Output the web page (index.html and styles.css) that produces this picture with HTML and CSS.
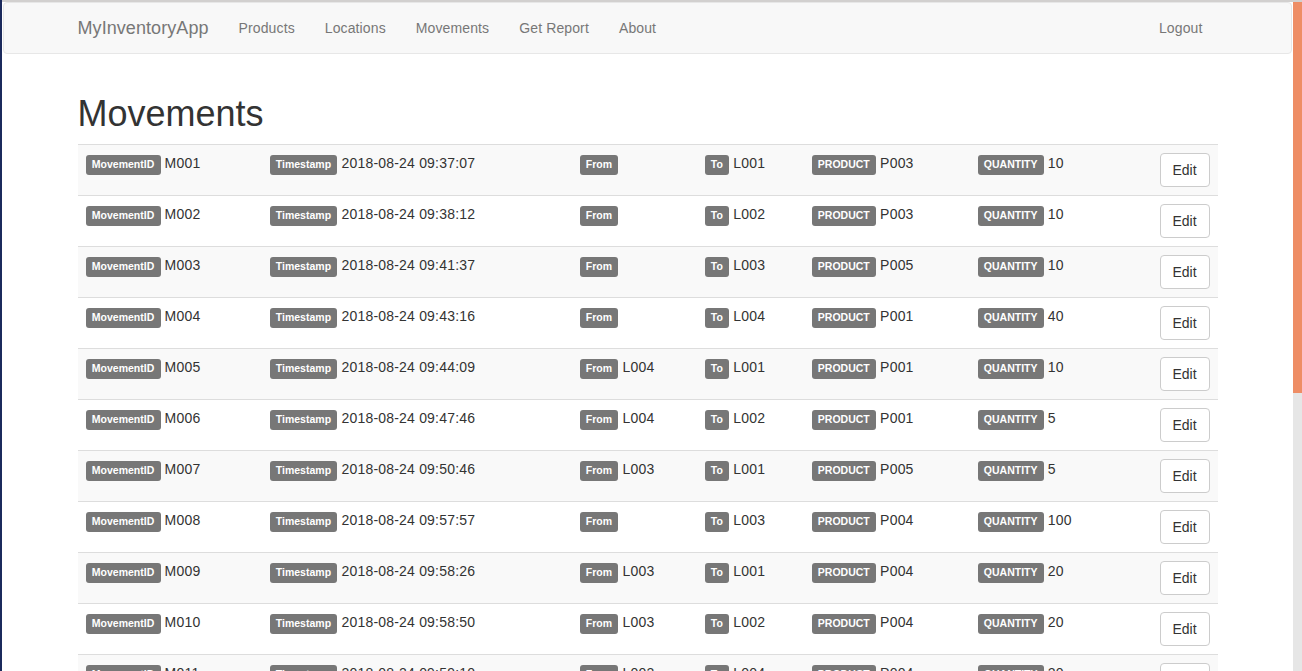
FILE: index.html
```html
<!DOCTYPE html>
<html lang="en">
<head>
<meta charset="utf-8">
<title>Movements - MyInventoryApp</title>
<link rel="stylesheet" href="styles.css">
</head>
<body>
<div class="window">
  <div class="viewport">
    <nav class="navbar">
      <div class="nav-container">
        <a class="brand" href="#">MyInventoryApp</a>
        <ul class="nav">
          <li><a href="#">Products</a></li>
          <li><a href="#">Locations</a></li>
          <li><a href="#">Movements</a></li>
          <li><a href="#">Get Report</a></li>
          <li><a href="#">About</a></li>
        </ul>
        <ul class="nav nav-right">
          <li><a href="#">Logout</a></li>
        </ul>
      </div>
    </nav>
    <main class="container">
      <h1 class="title">Movements</h1>
      <table class="table">
        <colgroup>
          <col class="c-id"><col class="c-ts"><col class="c-from"><col class="c-to"><col class="c-prod"><col class="c-qty"><col class="c-act">
        </colgroup>
        <tbody>
          <tr><td><span class="label">MovementID</span> M001</td><td><span class="label">Timestamp</span> 2018-08-24 09:37:07</td><td><span class="label">From</span> </td><td><span class="label">To</span> L001</td><td><span class="label">PRODUCT</span> P003</td><td><span class="label">QUANTITY</span> 10</td><td><a class="btn" href="#">Edit</a></td></tr>
          <tr><td><span class="label">MovementID</span> M002</td><td><span class="label">Timestamp</span> 2018-08-24 09:38:12</td><td><span class="label">From</span> </td><td><span class="label">To</span> L002</td><td><span class="label">PRODUCT</span> P003</td><td><span class="label">QUANTITY</span> 10</td><td><a class="btn" href="#">Edit</a></td></tr>
          <tr><td><span class="label">MovementID</span> M003</td><td><span class="label">Timestamp</span> 2018-08-24 09:41:37</td><td><span class="label">From</span> </td><td><span class="label">To</span> L003</td><td><span class="label">PRODUCT</span> P005</td><td><span class="label">QUANTITY</span> 10</td><td><a class="btn" href="#">Edit</a></td></tr>
          <tr><td><span class="label">MovementID</span> M004</td><td><span class="label">Timestamp</span> 2018-08-24 09:43:16</td><td><span class="label">From</span> </td><td><span class="label">To</span> L004</td><td><span class="label">PRODUCT</span> P001</td><td><span class="label">QUANTITY</span> 40</td><td><a class="btn" href="#">Edit</a></td></tr>
          <tr><td><span class="label">MovementID</span> M005</td><td><span class="label">Timestamp</span> 2018-08-24 09:44:09</td><td><span class="label">From</span> L004</td><td><span class="label">To</span> L001</td><td><span class="label">PRODUCT</span> P001</td><td><span class="label">QUANTITY</span> 10</td><td><a class="btn" href="#">Edit</a></td></tr>
          <tr><td><span class="label">MovementID</span> M006</td><td><span class="label">Timestamp</span> 2018-08-24 09:47:46</td><td><span class="label">From</span> L004</td><td><span class="label">To</span> L002</td><td><span class="label">PRODUCT</span> P001</td><td><span class="label">QUANTITY</span> 5</td><td><a class="btn" href="#">Edit</a></td></tr>
          <tr><td><span class="label">MovementID</span> M007</td><td><span class="label">Timestamp</span> 2018-08-24 09:50:46</td><td><span class="label">From</span> L003</td><td><span class="label">To</span> L001</td><td><span class="label">PRODUCT</span> P005</td><td><span class="label">QUANTITY</span> 5</td><td><a class="btn" href="#">Edit</a></td></tr>
          <tr><td><span class="label">MovementID</span> M008</td><td><span class="label">Timestamp</span> 2018-08-24 09:57:57</td><td><span class="label">From</span> </td><td><span class="label">To</span> L003</td><td><span class="label">PRODUCT</span> P004</td><td><span class="label">QUANTITY</span> 100</td><td><a class="btn" href="#">Edit</a></td></tr>
          <tr><td><span class="label">MovementID</span> M009</td><td><span class="label">Timestamp</span> 2018-08-24 09:58:26</td><td><span class="label">From</span> L003</td><td><span class="label">To</span> L001</td><td><span class="label">PRODUCT</span> P004</td><td><span class="label">QUANTITY</span> 20</td><td><a class="btn" href="#">Edit</a></td></tr>
          <tr><td><span class="label">MovementID</span> M010</td><td><span class="label">Timestamp</span> 2018-08-24 09:58:50</td><td><span class="label">From</span> L003</td><td><span class="label">To</span> L002</td><td><span class="label">PRODUCT</span> P004</td><td><span class="label">QUANTITY</span> 20</td><td><a class="btn" href="#">Edit</a></td></tr>
          <tr><td><span class="label">MovementID</span> M011</td><td><span class="label">Timestamp</span> 2018-08-24 09:59:10</td><td><span class="label">From</span> L002</td><td><span class="label">To</span> L004</td><td><span class="label">PRODUCT</span> P004</td><td><span class="label">QUANTITY</span> 20</td><td><a class="btn" href="#">Edit</a></td></tr>
        </tbody>
      </table>
    </main>
  </div>
  <div class="scrollbar" aria-hidden="true">
    <div class="scroll-thumb"></div>
  </div>
</div>
</body>
</html>
```
FILE: styles.css
```css
* { box-sizing: border-box; }

html, body {
  margin: 0;
  height: 100%;
  overflow: hidden;
}

body {
  background: #1b2a5c;
  padding-left: 2px;
  font-family: "Liberation Sans", Arial, sans-serif;
  font-size: 14px;
  line-height: 1.42857;
  color: #333;
}

.window {
  height: 671px;
  background: #fff;
  border-top: 2px solid #d2d0cf;
  display: flex;
}

.viewport {
  flex: 1;
  min-width: 0;
  height: 669px;
  overflow: hidden;
}

.scrollbar {
  flex: 0 0 9px;
  height: 669px;
  background: #e6e6e6;
}

.scroll-thumb {
  height: 391px;
  background: #ee8d65;
}

a { text-decoration: none; }

/* navbar */
.navbar {
  margin: 0 1px 20px 1px;
  min-height: 52px;
  background: #f8f8f8;
  border: 1px solid #e7e7e7;
  border-radius: 4px;
}

.nav-container {
  width: 1170px;
  margin: 0 auto;
  padding: 0 15px;
  display: flex;
  align-items: flex-start;
}

.brand {
  margin-left: -15px;
  padding: 15px;
  height: 50px;
  font-size: 18px;
  line-height: 20px;
  letter-spacing: 0.07px;
  color: #777;
}

.nav {
  list-style: none;
  margin: 0;
  padding: 0;
  display: flex;
}

.nav a {
  display: block;
  padding: 15px;
  line-height: 20px;
  letter-spacing: 0.12px;
  color: #777;
}

.nav-right {
  margin-left: auto;
}

/* content */
.container {
  display: flow-root;
  width: 1170px;
  margin: 0 auto;
  padding: 0 15px;
}

.title {
  margin: 20px 0 10px;
  font-size: 36px;
  font-weight: 500;
  line-height: 1.1;
  color: #333;
}

.table {
  width: 100%;
  table-layout: fixed;
  border-collapse: collapse;
  border-spacing: 0;
  margin-bottom: 20px;
}

.c-id { width: 184px; }
.c-ts { width: 310px; }
.c-from { width: 125px; }
.c-to { width: 107px; }
.c-prod { width: 166px; }
.c-qty { width: 182px; }
.c-act { width: 66px; }

.table td {
  padding: 8px;
  vertical-align: top;
  border-top: 1px solid #ddd;
  line-height: 20px;
  letter-spacing: 0.2px;
  white-space: nowrap;
}

.table tr:nth-child(odd) td {
  background: #f9f9f9;
}

.label {
  display: inline-block;
  padding: 3.6px 6.3px 5.9px;
  font-size: 10.5px;
  font-weight: bold;
  line-height: 1;
  letter-spacing: 0;
  color: #fff;
  background: #777;
  border-radius: 3px;
  vertical-align: baseline;
}

.btn {
  display: inline-block;
  padding: 6px 12px;
  font-size: 14px;
  line-height: 20px;
  letter-spacing: 0;
  color: #333;
  background: #fff;
  border: 1px solid #ccc;
  border-radius: 4px;
}
```
